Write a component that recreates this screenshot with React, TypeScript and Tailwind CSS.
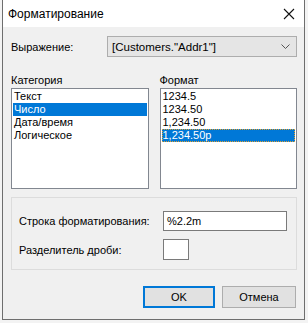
import React from "react";

const font = { fontFamily: '"Liberation Sans", "Segoe UI", sans-serif' };

const categories = ["Текст", "Число", "Дата/время", "Логическое"];
const formats = ["1234.5", "1234.50", "1,234.50", "1,234.50р"];

export default function App() {
  return (
    <div
      className="w-[308px] h-[323px] bg-[#f3f3f3] pl-[2px] text-[11px] text-black leading-[14px] whitespace-nowrap"
      style={font}
    >
      <div className="w-[303px] h-[320px] bg-[#f0f0f0] border-x border-b border-[#6e6e6e] flex flex-col">
        {/* title bar */}
        <div className="h-[27px] bg-white flex items-center justify-between pl-[5px] pr-[9px]">
          <span className="text-[12px]">Форматирование</span>
          <svg width="12" height="12" viewBox="0 0 12 12">
            <path d="M1 1L11 11M11 1L1 11" stroke="#111" strokeWidth="1.1" />
          </svg>
        </div>

        <div className="flex-1 pl-[8px] pr-[7px]">
          {/* expression row */}
          <div className="mt-[9px] flex items-center h-[21px]">
            <span className="w-[96px]">Выражение:</span>
            <div className="flex-1 h-[21px] bg-[#e5e5e5] border border-[#adadad] flex items-center justify-between pl-[4px] pr-[6px]">
              <span className="text-[11.5px]">[Customers."Addr1"]</span>
              <svg width="9" height="6" viewBox="0 0 9 6">
                <path d="M0.5 0.5L4.5 4.5L8.5 0.5" stroke="#555" fill="none" strokeWidth="1" />
              </svg>
            </div>
          </div>

          {/* lists */}
          <div className="mt-[16px] flex gap-[11px]">
            <div className="flex flex-col w-[138px]">
              <span className="h-[15px]">Категория</span>
              <div className="h-[101px] bg-white border border-[#828790] p-[1px] flex flex-col">
                {categories.map((c, i) => (
                  <div
                    key={c}
                    className={
                      i === 1
                        ? "h-[13px] leading-[13px] pl-[1px] bg-[#0078d7] text-white"
                        : "h-[13px] leading-[13px] pl-[1px]"
                    }
                  >
                    {c}
                  </div>
                ))}
              </div>
            </div>
            <div className="flex flex-col w-[138px]">
              <span className="h-[15px]">Формат</span>
              <div className="h-[101px] bg-white border border-[#828790] p-[1px] flex flex-col">
                {formats.map((c, i) => (
                  <div
                    key={c}
                    className={
                      i === 3
                        ? "h-[13px] leading-[13px] pl-[1px] bg-[#0078d7] text-white outline-1 outline-dotted outline-[#e0a030] -outline-offset-1"
                        : "h-[13px] leading-[13px] pl-[1px]"
                    }
                  >
                    {c}
                  </div>
                ))}
              </div>
            </div>
          </div>

          {/* group box */}
          <div className="mt-[8px] h-[73px] border border-[#dcdcdc] pl-[7px] pt-[13px] flex flex-col gap-[8px]">
            <div className="flex items-center h-[20px]">
              <span className="w-[144px]">Строка форматирования:</span>
              <div className="w-[124px] h-[20px] bg-white border border-[#7a7a7a] flex items-center pl-[3px]">
                %2.2m
              </div>
            </div>
            <div className="flex items-center h-[21px]">
              <span className="w-[144px]">Разделитель дроби:</span>
              <div className="w-[26px] h-[21px] bg-white border border-[#7a7a7a]" />
            </div>
          </div>

          {/* buttons */}
          <div className="mt-[16px] flex justify-end gap-[7px] pr-[1px]">
            <button className="w-[72px] h-[22px] bg-[#e1e1e1] border-2 border-[#0078d7]">
              OK
            </button>
            <button className="w-[74px] h-[22px] bg-[#e1e1e1] border border-[#adadad]">
              Отмена
            </button>
          </div>
        </div>
      </div>
    </div>
  );
}
